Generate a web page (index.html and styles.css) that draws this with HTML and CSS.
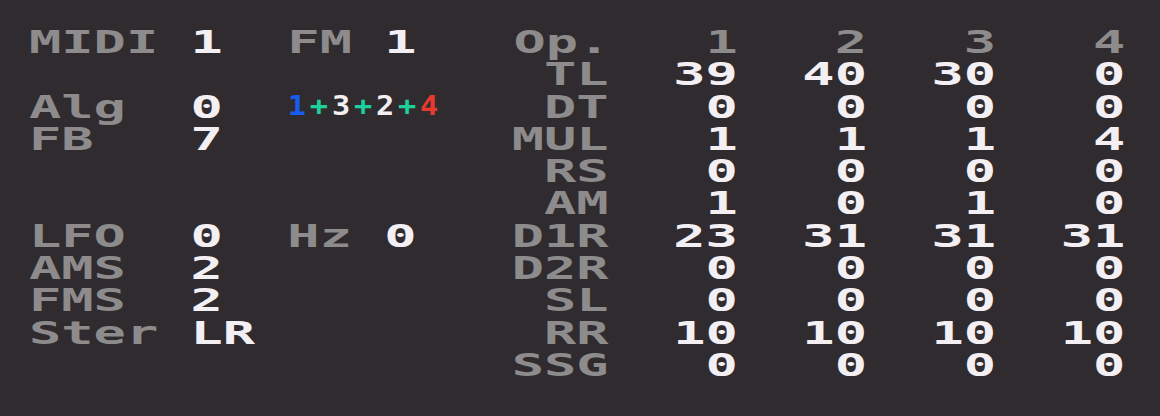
FILE: index.html
```html
<!DOCTYPE html>
<html>
<head>
<meta charset="utf-8">
<link rel="stylesheet" href="styles.css">
</head>
<body>
<div class="screen">
  <div class="cells">
    <div class="panel left">
      <div class="row"><span class="k">MIDI</span><span class="v">1</span><span class="k">FM</span><span class="v">1</span></div>
      <div class="row"></div>
      <div class="row"><span class="k">Alg</span><span class="v">0</span><span class="algo"><span class="c-blue">1</span><span class="c-green">+</span>3<span class="c-green">+</span>2<span class="c-green">+</span><span class="c-red">4</span></span></div>
      <div class="row"><span class="k">FB</span><span class="v">7</span></div>
      <div class="row"></div>
      <div class="row"></div>
      <div class="row"><span class="k">LFO</span><span class="v">0</span><span class="k">Hz</span><span class="v">0</span></div>
      <div class="row"><span class="k">AMS</span><span class="v">2</span></div>
      <div class="row"><span class="k">FMS</span><span class="v">2</span></div>
      <div class="row"><span class="k">Ster</span><span class="v">LR</span></div>
    </div>
    <div class="panel ops">
      <span class="k head">Op.</span><span class="k">1</span><span class="k">2</span><span class="k">3</span><span class="k">4</span>
      <span class="k">TL</span><span class="v">39</span><span class="v">40</span><span class="v">30</span><span class="v">0</span>
      <span class="k">DT</span><span class="v">0</span><span class="v">0</span><span class="v">0</span><span class="v">0</span>
      <span class="k">MUL</span><span class="v">1</span><span class="v">1</span><span class="v">1</span><span class="v">4</span>
      <span class="k">RS</span><span class="v">0</span><span class="v">0</span><span class="v">0</span><span class="v">0</span>
      <span class="k">AM</span><span class="v">1</span><span class="v">0</span><span class="v">1</span><span class="v">0</span>
      <span class="k">D1R</span><span class="v">23</span><span class="v">31</span><span class="v">31</span><span class="v">31</span>
      <span class="k">D2R</span><span class="v">0</span><span class="v">0</span><span class="v">0</span><span class="v">0</span>
      <span class="k">SL</span><span class="v">0</span><span class="v">0</span><span class="v">0</span><span class="v">0</span>
      <span class="k">RR</span><span class="v">10</span><span class="v">10</span><span class="v">10</span><span class="v">10</span>
      <span class="k">SSG</span><span class="v">0</span><span class="v">0</span><span class="v">0</span><span class="v">0</span>
    </div>
  </div>
</div>
</body>
</html>
```
FILE: styles.css
```css
html, body {
  margin: 0;
  padding: 0;
  background: #2f2b2e;
}
body {
  width: 1160px;
  height: 416px;
  overflow: hidden;
}
.screen {
  padding: 26px 0 0 29px;
}
.cells {
  display: flex;
  font-family: "DejaVu Sans Mono", monospace;
  font-weight: bold;
  font-size: 31.5px;
  line-height: 32.3px;
  transform: scaleX(1.703);
  transform-origin: 0 0;
  width: 34ch;
}
.k { color: #8d8b8c; }
.v { color: #f3eff3; }
.left {
  width: 15ch;
}
.left .row {
  display: grid;
  grid-template-columns: 5ch 3ch 3ch 4ch;
  height: 32.3px;
  white-space: pre;
}
.ops {
  display: grid;
  grid-template-columns: 3ch repeat(4, 4ch);
  grid-auto-rows: 32.3px;
  text-align: right;
  margin-left: -1px;
}
.ops .head {
  text-align: left;
  margin-left: 1px;
}
.algo {
  grid-column: 3 / span 2;
  font-size: 27.4px;
  line-height: 26px;
  letter-spacing: 3.4px;
  color: #f3eff3;
  transform: scaleX(0.65);
  transform-origin: 0 0;
  white-space: pre;
  padding-top: 2px;
}
.c-blue { color: #1a5cf0; }
.c-green { color: #1fd09c; }
.c-red { color: #e63a2e; }
```
